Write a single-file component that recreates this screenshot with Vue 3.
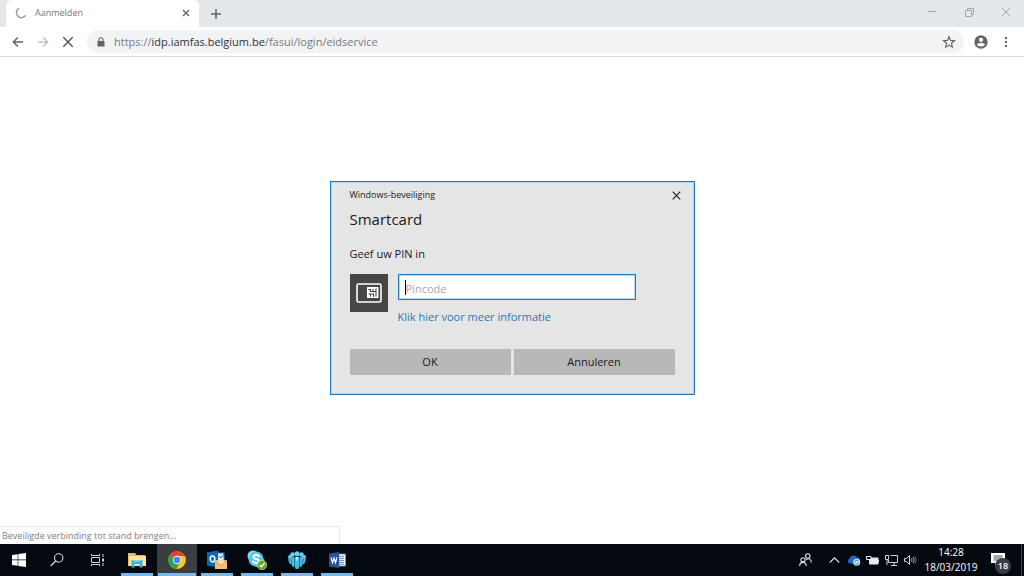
<script setup>
import { ref } from 'vue'

const pin = ref('')
const url = { scheme: 'https://', host: 'idp.iamfas.belgium.be', path: '/fasui/login/eidservice' }
</script>

<template>
  <div class="desktop">
    <header class="tabstrip">
      <div class="tab">
        <svg class="spinner" viewBox="0 0 12 12" width="12" height="12"><path d="M4.2 1.2A5 5 0 1 0 10.6 8.4" fill="none" stroke="#9a9da1" stroke-width="1.5" /></svg>
        <span class="tab-title">Aanmelden</span>
        <button class="icon-btn" aria-label="Tabblad sluiten">
          <svg viewBox="0 0 8 8" width="8" height="8"><path d="M1 1L7 7M7 1L1 7" stroke="#5f6368" stroke-width="1.3" /></svg>
        </button>
      </div>
      <button class="icon-btn new-tab" aria-label="Nieuw tabblad">
        <svg viewBox="0 0 10 10" width="10" height="10"><path d="M5 0V10M0 5H10" stroke="#5f6368" stroke-width="1.5" /></svg>
      </button>
      <div class="window-controls">
        <button class="icon-btn" aria-label="Minimaliseren"><svg viewBox="0 0 10 10" width="10" height="10"><path d="M1 4.5H9" stroke="#a3a5a8" /></svg></button>
        <button class="icon-btn" aria-label="Verkleinen"><svg viewBox="0 0 10 10" width="10" height="10"><path d="M1.5 3.5H7.500V9.500H1.500ZM3.500 3.500V1.500H9.500V7.500H7.500" fill="none" stroke="#a3a5a8" /></svg></button>
        <button class="icon-btn" aria-label="Sluiten"><svg viewBox="0 0 10 10" width="10" height="10"><path d="M1 1L9 9M9 1L1 9" stroke="#a3a5a8" /></svg></button>
      </div>
    </header>

    <nav class="toolbar">
      <button class="icon-btn nav-btn" aria-label="Terug"><svg viewBox="0 0 12 12" width="12" height="12"><path d="M11 6H1.500M5.800 1.500L1.300 6L5.800 10.500" fill="none" stroke="#5f6368" stroke-width="1.4" /></svg></button>
      <button class="icon-btn nav-btn" aria-label="Vooruit"><svg viewBox="0 0 12 12" width="12" height="12"><path d="M1 6H10.500M6.200 1.500L10.700 6L6.200 10.500" fill="none" stroke="#bdc0c3" stroke-width="1.4" /></svg></button>
      <button class="icon-btn nav-btn" aria-label="Laden stoppen"><svg viewBox="0 0 12 12" width="12" height="12"><path d="M1.300 1.300L10.700 10.700M10.700 1.300L1.300 10.700" stroke="#505357" stroke-width="1.4" /></svg></button>
      <div class="omnibox">
        <svg viewBox="0 0 8 10" width="8" height="10"><path d="M0.500 4H7.500V9.500H0.500Z" fill="#5f6368" /><path d="M2 4V2.700A2 2 0 0 1 6 2.700V4" fill="none" stroke="#5f6368" stroke-width="1.100" /></svg>
        <span class="url">{{ url.scheme }}<b>{{ url.host }}</b>{{ url.path }}</span>
        <button class="icon-btn star" aria-label="Bladwijzer"><svg viewBox="0 0 24 24" width="14" height="14"><path d="M12 3L14.600 9.300L21.400 9.800L16.200 14.200L17.900 20.900L12 17.300L6.100 20.900L7.800 14.200L2.600 9.800L9.400 9.300Z" fill="none" stroke="#5f6368" stroke-width="1.900" /></svg></button>
      </div>
      <button class="icon-btn" aria-label="Profiel"><svg viewBox="0 0 24 24" width="16" height="16"><path fill="#5f6368" fill-rule="evenodd" d="M12 2a10 10 0 1 0 0 20a10 10 0 0 0 0-20zM12 5.500a3.300 3.300 0 1 1 0 6.600a3.300 3.300 0 0 1 0-6.600zM5.800 15.600C7.200 13.900 10 13.400 12 13.400s4.800.5 6.200 2.200A7.500 7.500 0 0 1 5.800 15.600z" /></svg></button>
      <button class="icon-btn menu" aria-label="Menu"><svg viewBox="0 0 4 12" width="4" height="12"><g fill="#5f6368"><circle cx="2" cy="2" r="1.200" /><circle cx="2" cy="6" r="1.200" /><circle cx="2" cy="10" r="1.200" /></g></svg></button>
    </nav>

    <main class="page">
      <div class="status">Beveiligde verbinding tot stand brengen...</div>
    </main>

    <footer class="taskbar">
      <button class="task start" aria-label="Start"><svg viewBox="0 0 14 14" width="14" height="14"><path fill="#fff" d="M0 2L5.700 1.200V6.600H0ZM6.300 1.100L14 0V6.600H6.300ZM0 7.300H5.700V12.700L0 11.900ZM6.300 7.300H14V14L6.300 12.900Z" /></svg></button>
      <button class="task" aria-label="Zoeken"><svg viewBox="0 0 14 14" width="14" height="14"><circle cx="8.700" cy="5" r="4.200" fill="none" stroke="#d8dadd" stroke-width="1.100" /><path d="M5.700 8L0.700 13" stroke="#d8dadd" stroke-width="1.200" /></svg></button>
      <button class="task" aria-label="Taakweergave"><svg viewBox="0 0 15 14" width="15" height="14"><g fill="none" stroke="#d0d2d5"><path d="M1.500 4.500H9.500V9.500H1.500ZM1.500 1V2.500H9.500V1M1.500 13V11.500H9.500V13M13 1V4M13 10V13" /><path d="M13 5.500V8.500" stroke-width="2" /></g></svg></button>
      <button class="task open" aria-label="Verkenner"><svg viewBox="0 0 18 16" width="18" height="16"><path d="M0 1H7L8.500 3H17V14H0Z" fill="#e7bd57" /><path d="M1 4H18V14H1Z" fill="#fbe49a" /><path d="M3.500 8H14.500V15.500H11.500V12H6.500V15.500H3.500Z" fill="#44a9dc" /><path d="M5 8H13V9.500H5Z" fill="#8bd0ef" /></svg></button>
      <button class="task open active" aria-label="Chrome"><svg viewBox="0 0 18 18" width="18" height="18"><circle cx="9" cy="9" r="8.700" fill="#fbc916" /><path d="M9 9L1.500 4.600A8.700 8.700 0 0 1 16.600 4.900H9Z" fill="#e24134" /><path d="M9 9L1.500 4.600A8.700 8.700 0 0 0 8.500 17.700L12.500 11Z" fill="#2da04f" /><path d="M9 5H16.600A8.700 8.700 0 0 1 8.500 17.700L12.500 11A4 4 0 0 0 9 5Z" fill="#fbc916" /><circle cx="9" cy="9" r="4.200" fill="#fff" /><circle cx="9" cy="9" r="3.300" fill="#4385f4" /></svg></button>
      <button class="task open" aria-label="Outlook"><svg viewBox="0 0 20 20" width="20" height="20"><path d="M10 3H17V12H10Z" fill="#d9ebf8" stroke="#2a83c8" /><path d="M12 6L14 8L17 4" fill="none" stroke="#2272b9" /><path d="M0 2.500L11 0.500V17.500L0 15.500Z" fill="#0f68b3" /><ellipse cx="5.500" cy="9" rx="2.300" ry="2.900" fill="none" stroke="#fff" stroke-width="1.500" /><path d="M8 10.500H20V19H8Z" fill="#f2c078" /><path d="M8 10.500L14 15.500L20 10.500" fill="#fde0ae" stroke="#c98c3d" stroke-width=".7" /></svg></button>
      <button class="task open" aria-label="Skype"><svg viewBox="0 0 20 20" width="20" height="20"><circle cx="6" cy="6" r="5.500" fill="#8edcf4" /><circle cx="12" cy="12" r="5.500" fill="#35b5df" /><circle cx="9" cy="9" r="7.500" fill="#57c6e9" /><path d="M12 6.300C11.200 4.500 6.500 4.500 6.500 7C6.500 9.500 12 8.500 12 11.200C12 13.700 6.900 13.600 6 11.500" fill="none" stroke="#fff" stroke-width="2" stroke-linecap="round" /><circle cx="15" cy="15" r="4.700" fill="#63a51e" stroke="#dff0cc" stroke-width=".6" /><path d="M12.700 15L14.400 16.800L17.500 13.300" fill="none" stroke="#fff" stroke-width="1.400" /></svg></button>
      <button class="task open" aria-label="Groepen"><svg viewBox="0 0 18 18" width="18" height="18"><g fill="#6bcfef"><circle cx="9" cy="2.800" r="2.500" /><circle cx="4.500" cy="3.600" r="2.300" /><circle cx="13.500" cy="3.600" r="2.300" /><circle cx="1.900" cy="6" r="1.900" /><circle cx="16.100" cy="6" r="1.900" /></g><g fill="#45bde7"><path d="M6.400 5.800H11.600V14L10.400 18H7.600L6.400 14Z" /><path d="M2.700 6.300H6.100V16.500L4 15ZM15.300 6.300H11.900V16.500L14 15ZM0 7.800H2.500L3.600 14L1.200 12ZM18 7.800H15.500L14.400 14L16.800 12Z" /></g><path d="M7.800 6L9 11L10.200 6Z" fill="#d9f4fd" /></svg></button>
      <button class="task open" aria-label="Word"><svg viewBox="0 0 17 16" width="17" height="16"><path d="M9 2H16.500V14H9Z" fill="#e6eefb" stroke="#7695d0" stroke-width=".8" /><path d="M10 4.500H15M10 6.500H15M10 8.500H15M10 10.500H15M10 12.300H15" stroke="#557bc1" stroke-width=".8" /><path d="M0 1.500L10 0V16L0 14.500Z" fill="#28529c" /><path d="M2 5.300L3.500 10.700L5 6L6.500 10.700L8 5.300" fill="none" stroke="#fff" stroke-width="1.200" /></svg></button>

      <div class="tray">
        <button class="tray-btn people" aria-label="Personen"><svg viewBox="0 0 13 14" width="13" height="14"><g fill="none" stroke="#e4e6e8" stroke-width="1.100"><circle cx="8.800" cy="3" r="2.200" /><circle cx="4" cy="6.800" r="2.100" /><path d="M0.700 13C0.700 8.200 7.300 8.200 7.300 13M7 7C9 4.600 12.300 6 12.300 9.500" /></g></svg></button>
        <button class="tray-btn" aria-label="Verborgen pictogrammen"><svg viewBox="0 0 11 6" width="11" height="6"><path d="M0.800 5.500L5.500 0.800L10.200 5.500" fill="none" stroke="#e4e6e8" stroke-width="1.100" /></svg></button>
        <button class="tray-btn" aria-label="OneDrive"><svg viewBox="0 0 14 12" width="14" height="12"><path d="M2.500 9.500A2.600 2.600 0 0 1 2.500 4.700A4 4 0 0 1 9.500 3A3.500 3.500 0 0 1 13 7V9.500Z" fill="#1b6fc0" /><circle cx="9.700" cy="8.300" r="3.500" fill="#c9e0f1" /><path d="M7.800 7.800A2 2 0 0 1 11.500 7.500M11.600 9A2 2 0 0 1 7.900 9.200" fill="none" stroke="#33739f" stroke-width=".9" /></svg></button>
        <button class="tray-btn" aria-label="Batterij"><svg viewBox="0 0 13 10" width="13" height="10"><path d="M3.500 3H12V9H3.500Z" fill="#e8e9ea" stroke="#e8e9ea" /><path d="M12 5H13V7H12Z" fill="#e8e9ea" /><path d="M0.500 1.500H5V4.500H0.500Z" fill="#050a12" stroke="#e8e9ea" /></svg></button>
        <button class="tray-btn" aria-label="Netwerk"><svg viewBox="0 0 13 12" width="13" height="12"><g fill="none" stroke="#cfd1d4"><path d="M5.500 1.500H12.500V8.500H3.500V6M9 8.500V11M6 11.500H12M0.500 1.500H3.500V5.500H0.500ZM2 5.500V11" /></g></svg></button>
        <button class="tray-btn" aria-label="Volume"><svg viewBox="0 0 13 12" width="13" height="12"><path d="M0.500 4.500H2.500L5.500 1.500V10.500L2.500 7.500H0.500Z" fill="none" stroke="#d7d9db" /><path d="M7.500 4.300Q8.500 6 7.500 7.700M9.200 3Q11 6 9.200 9" fill="none" stroke="#aaadb1" /><path d="M11 2Q13.300 6 11 10" fill="none" stroke="#5c6067" /></svg></button>
        <div class="clock"><time>14:28</time><span>18/03/2019</span></div>
        <button class="tray-btn action" aria-label="Actiecentrum">
          <svg viewBox="0 0 14 13" width="14" height="13"><path d="M0 0H14V10H7L4 13V10H0Z" fill="#fff" /><path d="M2.500 3H11.500M2.500 5H11.500M2.500 7H8" stroke="#343b45" stroke-width=".9" /></svg>
          <span class="count">18</span>
        </button>
      </div>
    </footer>

    <div class="overlay">
      <form class="dialog" role="dialog" aria-labelledby="dialog-title" @submit.prevent>
        <div class="dialog-bar">
          <span>Windows-beveiliging</span>
          <button type="button" class="icon-btn" aria-label="Sluiten"><svg viewBox="0 0 9 9" width="9" height="9"><path d="M0.700 0.700L8.300 8.300M8.300 0.700L0.700 8.300" stroke="#222" stroke-width="1.200" /></svg></button>
        </div>
        <h1 id="dialog-title">Smartcard</h1>
        <label for="pin">Geef uw PIN in</label>
        <div class="credential">
          <div class="card-icon"><svg viewBox="0 0 26 20" width="26" height="20"><rect x="1" y="1" width="24" height="18" rx="1.500" fill="none" stroke="#fff" stroke-width="1.600" /><path d="M11 4H22.500V15H11Z" fill="#fff" /><path d="M12.500 6.500H14.500V8.500H17V6M12.500 11H17.500V14M14.500 11V13.500M20 5.500V13.500M17 8.500H20" fill="none" stroke="#464646" stroke-width="1.100" /></svg></div>
          <div class="fields">
            <div class="pin-box">
              <input id="pin" v-model="pin" type="password" placeholder="Pincode" />
              <i class="caret"></i>
            </div>
            <a href="#">Klik hier voor meer informatie</a>
          </div>
        </div>
        <div class="actions">
          <button type="submit">OK</button>
          <button type="button">Annuleren</button>
        </div>
      </form>
    </div>
  </div>
</template>

<style>
body { margin: 0; }
</style>

<style scoped>
* { box-sizing: border-box; }
.desktop {
  display: flex;
  flex-direction: column;
  min-height: 100vh;
  background: #fff;
  color: #1b1b1b;
  font: 11px/16px "Open Sans", "Noto Sans", sans-serif;
}
button, input { font: inherit; color: inherit; }
svg { display: block; flex: none; }
.icon-btn {
  display: flex;
  align-items: center;
  justify-content: center;
  padding: 0;
  border: 0;
  background: none;
}

.tabstrip { display: flex; height: 27px; background: #e5e8eb; }
.tab {
  display: flex;
  align-items: center;
  gap: 8px;
  width: 193px;
  margin-left: 6px;
  padding: 0 9px 1px;
  border-radius: 6px 6px 0 0;
  background: #fff;
}
.tab-title { flex: 1; color: #74777b; font-size: 9px; }
.new-tab { width: 34px; }
.window-controls { display: flex; margin-left: auto; padding-bottom: 4px; }
.window-controls .icon-btn { width: 37px; }

.toolbar {
  display: flex;
  align-items: center;
  height: 30px;
  padding: 0 6px 0 5px;
  border-bottom: 1px solid #dadce0;
  background: #fff;
}
.nav-btn { width: 25px; height: 24px; }
.omnibox {
  display: flex;
  flex: 1;
  align-items: center;
  gap: 9px;
  height: 23px;
  margin: 0 9px 0 7px;
  padding: 0 8px 0 10px;
  border-radius: 12px;
  background: #f1f3f4;
}
.url { flex: 1; color: #797c80; }
.url b { color: #303235; font-weight: 400; }
.menu { width: 24px; margin-left: 5px; }

.page { display: flex; flex: 1; align-items: flex-end; }
.status {
  width: 340px;
  padding: 1px 2px 0;
  border: 1px solid #e6e6e6;
  border-width: 1px 1px 0 0;
  color: #808080;
  font-size: 9px;
}

.taskbar { display: flex; height: 32px; background: #040910; color: #fff; }
.task {
  position: relative;
  display: flex;
  align-items: center;
  justify-content: center;
  width: 40px;
  padding: 0;
  border: 0;
  background: none;
}
.start { width: 37px; }
.open::after {
  content: "";
  position: absolute;
  inset: auto 4px 0;
  height: 3px;
  background: #76b9ed;
}
.active { background: #3a3d42; }
.active::after { inset: auto 1px 0; }
.tray { display: flex; align-items: center; margin-left: auto; border-right: 1px solid #3c4046; margin-right: 2px; }
.tray-btn {
  display: flex;
  align-items: center;
  justify-content: center;
  width: 19px;
  height: 32px;
  padding: 0;
  border: 0;
  background: none;
}
.people { width: 39px; }
.clock {
  display: flex;
  flex-direction: column;
  align-items: center;
  width: 62px;
  font-size: 10px;
  line-height: 15px;
}
.action { position: relative; width: 39px; padding: 0 8px 2px 0; }
.count {
  position: absolute;
  right: 10px;
  bottom: 2px;
  width: 16px;
  height: 16px;
  border-radius: 8px;
  background: #373c45;
  font-size: 9px;
  font-weight: 600;
  line-height: 16px;
}

.overlay {
  position: absolute;
  inset: 0;
  display: flex;
  align-items: center;
  justify-content: center;
}
.dialog {
  width: 365px;
  padding: 5px 19px 19px;
  border: 1px solid #2079bd;
  background: #e5e5e5;
  box-shadow: inset 0 0 0 1px #b5d3e8;
}
.dialog-bar { display: flex; justify-content: space-between; margin-right: -12px; font-size: 9px; }
.dialog-bar .icon-btn { width: 20px; }
h1 { margin: 4px 0 0; font-size: 15px; font-weight: 400; line-height: 24px; }
label { display: block; margin-top: 15px; }
.credential { display: flex; gap: 10px; margin-top: 12px; }
.card-icon {
  display: flex;
  align-items: center;
  justify-content: center;
  width: 38px;
  height: 38px;
  background: #464646;
}
.fields { flex: 1; padding-right: 39px; }
.pin-box { position: relative; }
.pin-box input {
  display: block;
  width: 100%;
  height: 26px;
  padding: 2px 7px 0;
  border: 1px solid #2079bd;
  outline: 0;
  background: #fff;
  box-shadow: inset 0 0 0 1px #b5d9f0;
}
.pin-box input::placeholder { color: #a6a6a6; opacity: 1; }
.caret { position: absolute; left: 7px; top: 6px; width: 1px; height: 15px; background: #000; }
.fields a { display: block; margin-top: 9px; color: #2179bd; text-decoration: none; }
.actions { display: grid; grid-template-columns: 1fr 1fr; gap: 3px; margin-top: 24px; }
.actions button { height: 26px; padding: 0; border: 0; background: #b8b8b8; }
</style>
